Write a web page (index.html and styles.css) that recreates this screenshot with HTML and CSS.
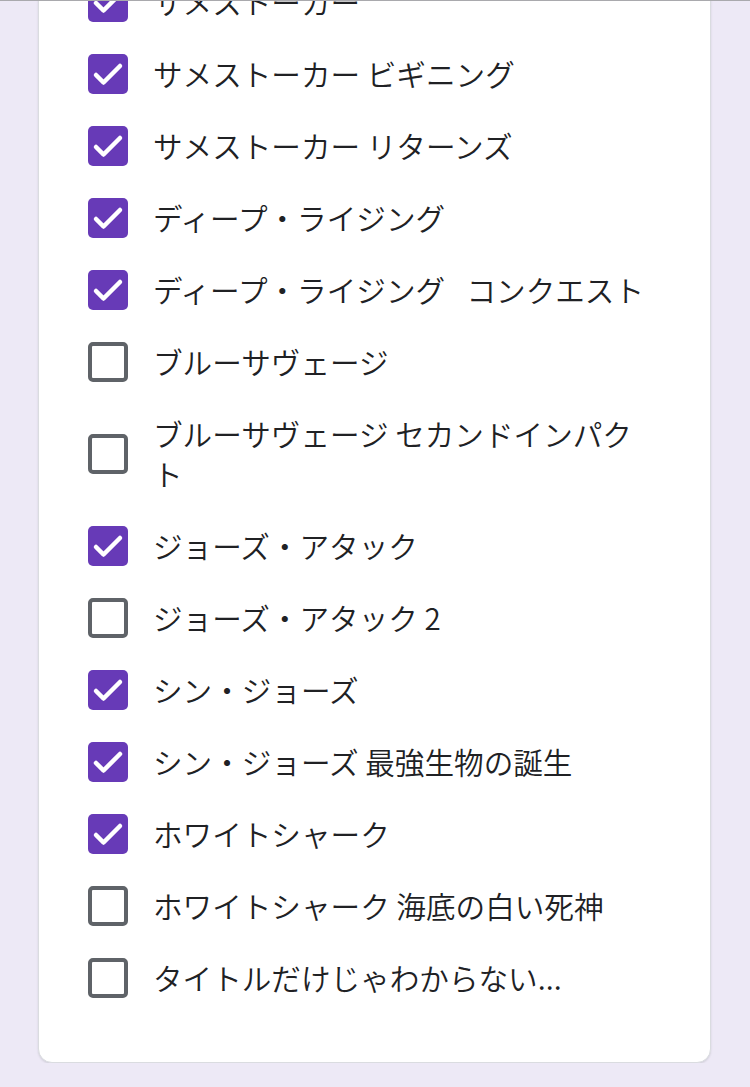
FILE: index.html
```html
<!DOCTYPE html>
<html lang="ja">
<head>
    <meta charset="UTF-8">
    <meta name="viewport" content="width=device-width, initial-scale=1.0">
    <title>サメ映画</title>
    <link rel="stylesheet" href="styles.css">
</head>
<body>
    <div class="topline"></div>
    <div class="card">
        <ul class="options">
            <li class="option checked"><span class="box"><svg viewBox="0 0 40 40"><polyline points="8,21 15.5,28.5 32,12"/></svg></span><span class="label">サメストーカー</span></li>
            <li class="option checked"><span class="box"><svg viewBox="0 0 40 40"><polyline points="8,21 15.5,28.5 32,12"/></svg></span><span class="label">サメストーカー ビギニング</span></li>
            <li class="option checked"><span class="box"><svg viewBox="0 0 40 40"><polyline points="8,21 15.5,28.5 32,12"/></svg></span><span class="label">サメストーカー リターンズ</span></li>
            <li class="option checked"><span class="box"><svg viewBox="0 0 40 40"><polyline points="8,21 15.5,28.5 32,12"/></svg></span><span class="label">ディープ・ライジング</span></li>
            <li class="option checked"><span class="box"><svg viewBox="0 0 40 40"><polyline points="8,21 15.5,28.5 32,12"/></svg></span><span class="label">ディープ・ライジング&ensp; コンクエスト</span></li>
            <li class="option"><span class="box"></span><span class="label">ブルーサヴェージ</span></li>
            <li class="option"><span class="box"></span><span class="label">ブルーサヴェージ セカンドインパクト</span></li>
            <li class="option checked"><span class="box"><svg viewBox="0 0 40 40"><polyline points="8,21 15.5,28.5 32,12"/></svg></span><span class="label">ジョーズ・アタック</span></li>
            <li class="option"><span class="box"></span><span class="label">ジョーズ・アタック 2</span></li>
            <li class="option checked"><span class="box"><svg viewBox="0 0 40 40"><polyline points="8,21 15.5,28.5 32,12"/></svg></span><span class="label">シン・ジョーズ</span></li>
            <li class="option checked"><span class="box"><svg viewBox="0 0 40 40"><polyline points="8,21 15.5,28.5 32,12"/></svg></span><span class="label">シン・ジョーズ 最強生物の誕生</span></li>
            <li class="option checked"><span class="box"><svg viewBox="0 0 40 40"><polyline points="8,21 15.5,28.5 32,12"/></svg></span><span class="label">ホワイトシャーク</span></li>
            <li class="option"><span class="box"></span><span class="label">ホワイトシャーク 海底の白い死神</span></li>
            <li class="option"><span class="box"></span><span class="label">タイトルだけじゃわからない...</span></li>
        </ul>
    </div>
</body>
</html>
```

FILE: styles.css
```css
body {
    margin: 0;
    background: #ede9f6;
    font-family: "Noto Sans CJK JP", "Noto Sans", sans-serif;
    color: #202124;
    overflow: hidden;
}
.topline {
    position: fixed;
    top: 0;
    left: 0;
    right: 0;
    height: 1px;
    background: #a9a9ad;
    z-index: 2;
}
.card {
    margin: -51px 39px 0 38px;
    background: #fff;
    border: 1px solid #dadce0;
    border-radius: 0 0 14px 14px;
    box-shadow: 0 1px 2px rgba(60, 64, 67, 0.15);
    padding: 16px 0 48px;
}
.options {
    list-style: none;
    margin: 0;
    padding: 0 0 0 49px;
}
.option {
    display: flex;
    align-items: center;
    gap: 25px;
    padding: 16px 0;
}
.box {
    flex: none;
    width: 40px;
    height: 40px;
    box-sizing: border-box;
    border: 4px solid #5f6368;
    border-radius: 5px;
}
.checked .box {
    border: none;
    background: #673ab7;
}
.box svg {
    display: block;
    width: 40px;
    height: 40px;
}
.box polyline {
    fill: none;
    stroke: #fff;
    stroke-width: 4.5;
    stroke-linecap: round;
    stroke-linejoin: round;
}
.label {
    font-size: 29.6px;
    font-weight: 350;
    line-height: 40px;
    width: 500px;
}
```
